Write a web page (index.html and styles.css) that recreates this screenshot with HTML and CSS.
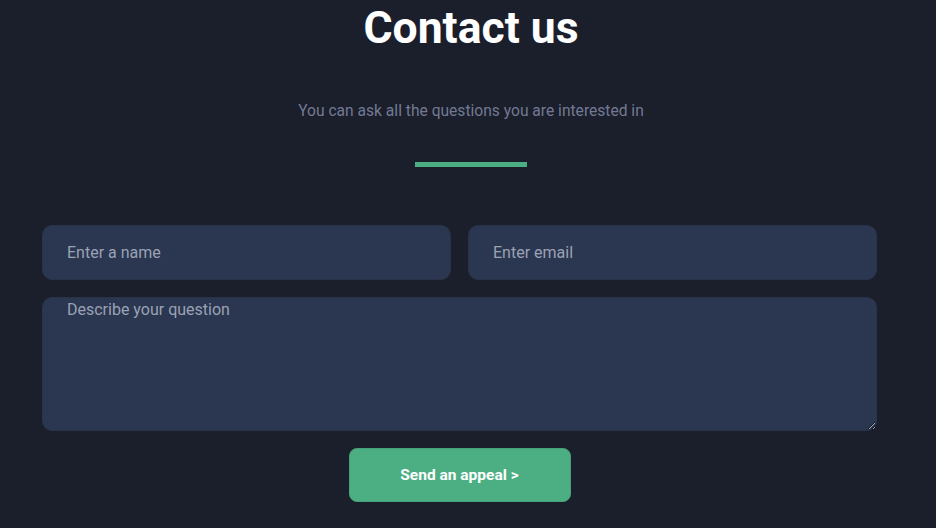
FILE: index.html
```html
<!DOCTYPE html>
<html lang="en">

<head>
  <meta charset="UTF-8">
  <meta name="viewport" content="width=device-width, initial-scale=1.0">
  <title>Contact us</title>
  <link rel="stylesheet" href="styles.css">
</head>

<body>
  <section class="contact">
    <div class="contact__header">
      <h1 class="contact__title">Contact us</h1>
      <p class="contact__subtitle">You can ask all the questions you are interested in</p>
      <div class="contact__line"></div>
    </div>
    <form class="contact__form">
      <div class="contact__row">
        <input class="contact__input" type="text" placeholder="Enter a name">
        <input class="contact__input" type="email" placeholder="Enter email">
      </div>
      <textarea class="contact__input contact__textarea" placeholder="Describe your question"></textarea>
      <button class="contact__button" type="button">Send an appeal &gt;</button>
    </form>
  </section>
</body>

</html>
```

FILE: styles.css
```css
* {
  box-sizing: border-box;
}

body {
  margin: 0;
  height: 100vh;
  font-family: Roboto, "Open Sans", Arial, sans-serif;
  background-color: #1b1e2b;
  overflow: hidden;
}

.contact__header {
  display: flex;
  flex-direction: column;
  align-items: center;
  padding-left: 6px;
}

.contact__title {
  margin: 0;
  padding-top: 2px;
  font-size: 44.5px;
  font-weight: 700;
  line-height: 52px;
  color: #ffffff;
}

.contact__subtitle {
  margin: 47px 0 0;
  font-size: 15.6px;
  line-height: 20px;
  color: #727a93;
}

.contact__line {
  width: 112px;
  height: 5px;
  margin-top: 41px;
  background-color: #4caf83;
}

.contact__form {
  display: flex;
  flex-direction: column;
  align-items: center;
  gap: 17px;
  width: 835px;
  margin: 58px 0 0 42px;
}

.contact__row {
  display: flex;
  gap: 17px;
  width: 100%;
}

.contact__input {
  flex: 1;
  height: 55px;
  padding: 0 24px;
  border: 1px solid #293247;
  border-radius: 10px;
  outline: none;
  background-color: #2b3650;
  font-family: inherit;
  font-size: 16px;
  color: #d8dce6;
}

.contact__input::placeholder {
  color: #9aa2b4;
}

.contact__textarea {
  flex: none;
  width: 100%;
  height: 134px;
  padding-top: 2px;
  resize: vertical;
}

.contact__button {
  width: 222px;
  height: 54px;
  border: 1px solid #46a079;
  border-radius: 8px;
  background-color: #4caf83;
  font-family: inherit;
  font-size: 15.5px;
  font-weight: 700;
  color: #ffffff;
  cursor: pointer;
}
```
